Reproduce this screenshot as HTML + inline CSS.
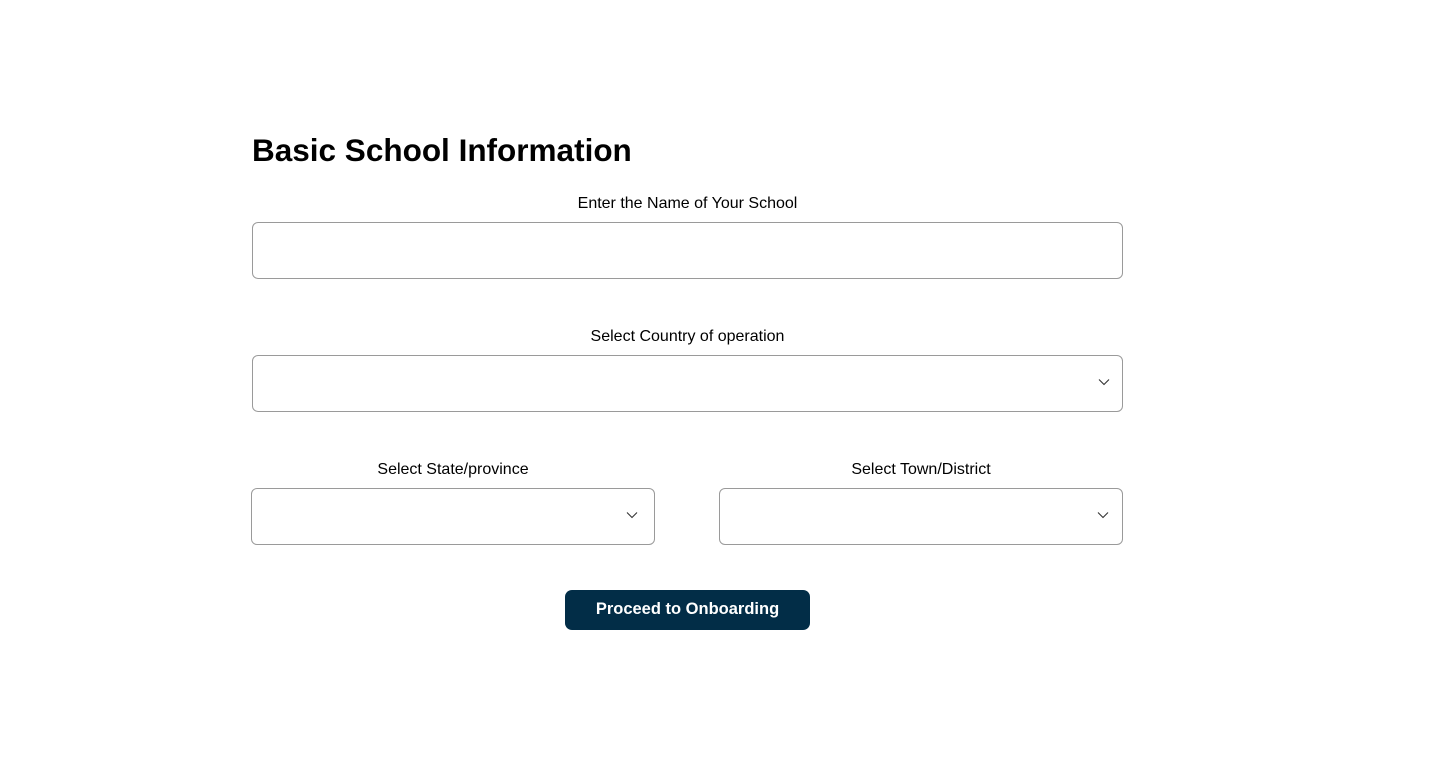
<!DOCTYPE html>
<html><head><style>
body{margin:0;background:#fff;font-family:"Liberation Sans",sans-serif;color:#000}
.h{position:absolute;left:252px;top:132px;font-size:31.5px;font-weight:bold;margin:0;letter-spacing:0}
.l{position:absolute;font-size:16px;text-align:center}
.b{position:absolute;border:1px solid #9a9a9a;border-radius:6px;box-sizing:border-box;height:57px}
.c{position:absolute;top:22px;width:12px;height:8px}
.btn{position:absolute;left:565px;top:590px;width:245px;height:40px;background:#022d47;border-radius:7px;color:#fff;font-weight:bold;font-size:16.5px;text-align:center;line-height:39px}
</style></head><body>
<h1 class="h">Basic School Information</h1>
<div class="l" style="left:252px;width:871px;top:195px">Enter the Name of Your School</div>
<div class="b" style="left:252px;top:222px;width:871px"></div>
<div class="l" style="left:252px;width:871px;top:328px">Select Country of operation</div>
<div class="b" style="left:252px;top:355px;width:871px"><svg class="c" style="left:845px" viewBox="0 0 12 8"><path d="M1 1.5L6 6.5L11 1.5" fill="none" stroke="#333" stroke-width="1.1"/></svg></div>
<div class="l" style="left:251px;width:404px;top:461px">Select State/province</div>
<div class="b" style="left:251px;top:488px;width:404px"><svg class="c" style="left:374px" viewBox="0 0 12 8"><path d="M1 1.5L6 6.5L11 1.5" fill="none" stroke="#333" stroke-width="1.1"/></svg></div>
<div class="l" style="left:719px;width:404px;top:461px">Select Town/District</div>
<div class="b" style="left:719px;top:488px;width:404px"><svg class="c" style="left:377px" viewBox="0 0 12 8"><path d="M1 1.5L6 6.5L11 1.5" fill="none" stroke="#333" stroke-width="1.1"/></svg></div>
<div class="btn">Proceed to Onboarding</div>
</body></html>
